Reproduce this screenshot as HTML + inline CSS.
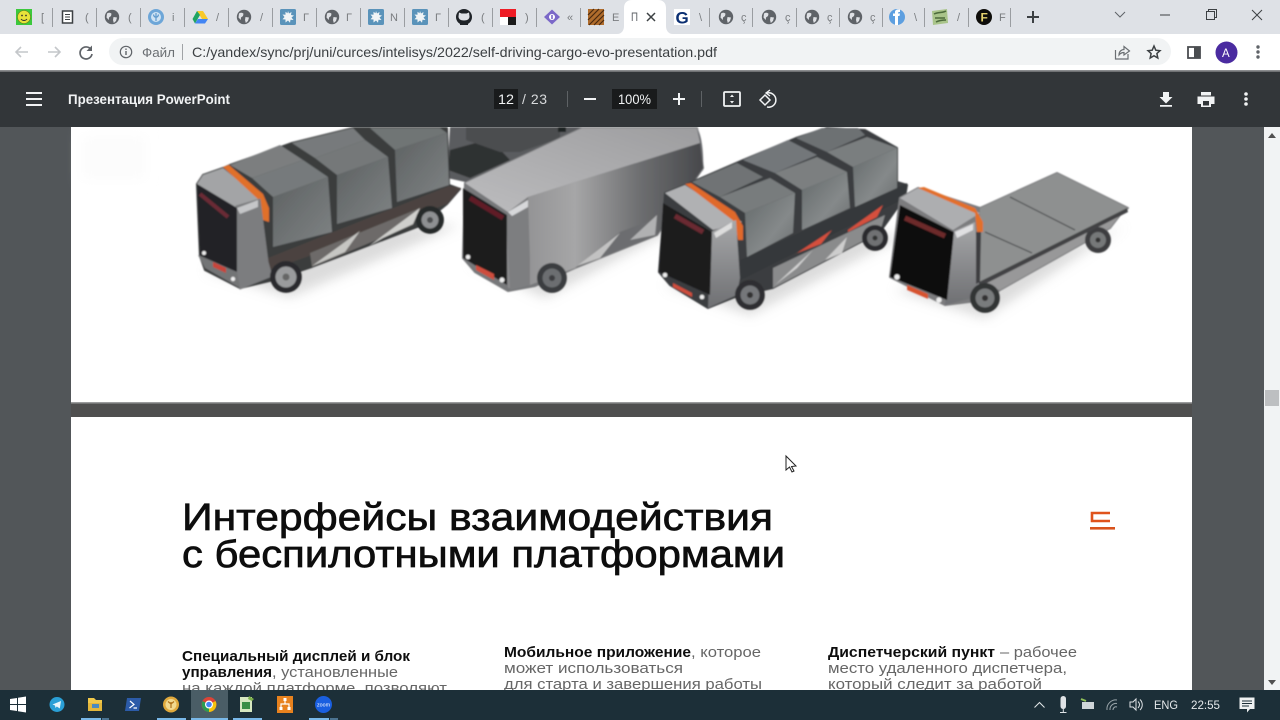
<!DOCTYPE html>
<html lang="ru"><head><meta charset="utf-8"><title>Презентация PowerPoint</title>
<style>
html,body{margin:0;padding:0;width:1280px;height:720px;overflow:hidden;background:#525659}
svg{display:block;position:absolute;left:0;top:0}
text{font-family:"Liberation Sans",sans-serif}
</style></head><body>
<svg width="1280" height="720" viewBox="0 0 1280 720" xmlns="http://www.w3.org/2000/svg">
<defs>
<filter id="b05" x="-5%" y="-5%" width="110%" height="110%"><feGaussianBlur stdDeviation="0.7"/></filter>
<filter id="b6" x="-30%" y="-100%" width="160%" height="300%"><feGaussianBlur stdDeviation="6"/></filter>
<filter id="bi" x="-10%" y="-10%" width="120%" height="120%"><feGaussianBlur stdDeviation="0.35"/></filter>
<linearGradient id="box" x1="0" y1="0" x2="1" y2="1"><stop offset="0" stop-color="#5d6162"/><stop offset="1" stop-color="#7f8384"/></linearGradient>
<linearGradient id="box2" x1="0" y1="0" x2="1" y2="1"><stop offset="0" stop-color="#63696a"/><stop offset=".6" stop-color="#85898a"/><stop offset="1" stop-color="#6a6e6f"/></linearGradient>
<linearGradient id="van" x1="0" y1="0" x2="1" y2="0"><stop offset="0" stop-color="#8b8b8d"/><stop offset=".35" stop-color="#a6a6a7"/><stop offset=".68" stop-color="#6d6e70"/><stop offset="1" stop-color="#47484b"/></linearGradient>
<linearGradient id="vanroof" x1="0" y1="1" x2="1" y2="0"><stop offset="0" stop-color="#bcbcbe"/><stop offset="1" stop-color="#9d9d9f"/></linearGradient>
<linearGradient id="cab" x1="0" y1="0" x2="0" y2="1"><stop offset="0" stop-color="#a7a8aa"/><stop offset="1" stop-color="#6e6f72"/></linearGradient>
<symbol id="globe" viewBox="0 0 16 16"><circle cx="8" cy="8" r="7.2" fill="#5f6368"/><path d="M3 4.500c2-1 3-1 4.500.2l-.5 2.300L5 8.500 4.800 11 2.500 8.500zM9.500 8l3.500.5-1 3.500-2.200 2-.8-3z" fill="#dfe1e5"/></symbol>
<symbol id="splat" viewBox="0 0 16 16"><rect width="16" height="16" rx="1.500" fill="#5a93ba"/><path d="M8 2l1 2.500 2.500-1.500-.5 3 3 .5-2.500 2 2 2.500-3-.3-.5 3-2-2.200-2.500 2 0-3-3-.3 2-2.200-2-2.500 3 .2 0-3 2 1.500z" fill="#f0f4f6"/></symbol>
</defs>

<!-- page background -->
<rect x="0" y="0" width="1280" height="720" fill="#525659"/>
<rect x="71" y="403" width="1121" height="14" fill="#4f4f4f"/>
<rect x="71" y="127" width="1121" height="276" fill="#ffffff"/>
<rect x="71" y="402" width="1121" height="1.500" fill="#9b9c9d"/>
<rect x="71" y="417" width="1121" height="280" fill="#ffffff"/>
<rect x="81" y="135" width="65" height="45" fill="#fcfcfc" filter="url(#b6)"/>

<!-- trucks -->
<g filter="url(#b05)">
<g fill="#b8b8b8" opacity=".5" filter="url(#b6)">
<path d="M205 270L290 297 460 225 400 225z"/><path d="M470 262L545 298 700 215 650 225z"/><path d="M665 285L750 315 905 235 860 235z"/><path d="M895 290L985 318 1125 225 1090 240z"/>
</g>
<!-- background flatbed behind van -->
<path d="M450 127H590L510 163 470 183 447 178z" fill="#5a5c5e"/>
<path d="M450 150L490 139 510 160 470 178 448 170z" fill="#2e3032"/>
<path d="M466 127H560V138L520 152H500L466 140z" fill="#4c4e50"/>
<rect x="558" y="127" width="8" height="5" fill="#1f2022"/>

<!-- TRUCK 1 -->
<path d="M197 184L203 175 223 168 230 165 292 143 353 128 447 128 449 185 460 189 447 204 420 226 312 267 270 281 240 288 205 270 200 256z" fill="#3b3c3e" stroke="#3b3c3e" stroke-width="2" stroke-linejoin="round"/>
<path d="M268 258L449 186 461 188 447 204 312 255 270 270z" fill="#4b4340"/>
<path d="M310 253L420 208 413 225 393 233 312 267z" fill="#6d6b69"/>
<path d="M312 266L360 231 345 252z" fill="#c6c6c3"/>
<path d="M369 246L420 208 413 224 383 238z" fill="#cfcfcc"/>
<circle cx="430" cy="220" r="14" fill="#27292b"/><circle cx="430" cy="220" r="8.500" fill="#8e9092"/><circle cx="430" cy="220" r="3" fill="#4d4f51"/>
<path d="M230 165L280 145 303 160 252 178z" fill="#7b7e7f"/>
<path d="M292 143L353 128 365 140 315 158z" fill="#777a7b"/>
<path d="M370 128H440L447 133 395 150z" fill="#707475"/>
<path d="M395 150L447 133 449 185 397 202z" fill="url(#box)"/>
<path d="M337 175L388 157 392 208 337 224z" fill="url(#box)"/>
<path d="M315 158L365 140 388 157 337 175z" fill="#757879"/>
<path d="M273 197L328 177 332 232 273 247z" fill="url(#box)"/>
<path d="M252 178L303 160 328 177 273 197z" fill="#767a7b"/>
<path d="M197 184L203 175 223 168 262 200 237 208z" fill="#a3a4a6"/>
<path d="M223 167L229 165 263 194 269 208 269 222 263 220 260 201z" fill="#e0702a"/>
<path d="M236 206L260 199 268 262 272 276 240 289 236 275z" fill="#7c7d7f" stroke="#7c7d7f" stroke-linejoin="round"/>
<path d="M237 208L258 200 258 207 240 214z" fill="#c5c6c8"/>
<path d="M197 184L237 208 237 272 200 255z" fill="#232426"/>
<path d="M200 194L228 217" stroke="#6b2a35" stroke-width="4"/>
<path d="M198 255L237 272 240 288 205 268z" fill="#737476"/>
<path d="M213 262L226 268 226 273 213 267z" fill="#c8453a"/>
<circle cx="204" cy="253" r="2" fill="#eee"/><circle cx="233" cy="279" r="2.200" fill="#eee"/>
<circle cx="286" cy="277" r="16" fill="#2a2c2e"/><circle cx="286" cy="277" r="10.500" fill="#9a9b9d"/><circle cx="286" cy="277" r="3.500" fill="#666"/>

<!-- TRUCK 2 -->
<path d="M465 183L582 128 697 128 703 168 657 235 575 268 535 286 508 291 475 272 463 258z" fill="#77787a" stroke="#77787a" stroke-width="2" stroke-linejoin="round"/>
<path d="M465 183L582 128H697L700 143 528 197 508 212z" fill="url(#vanroof)"/>
<path d="M697 128C702 135 704 155 703 172L700 143z" fill="#6b6c6f"/>
<path d="M528 197L700 143 703 168 657 235 575 268 530 285 508 288 506 215z" fill="url(#van)"/>
<path d="M575 268L620 232 657 218 657 235z" fill="#6c6d6f"/>
<path d="M577 266L620 233 600 258z" fill="#c2c2c2"/>
<path d="M630 240L657 215 655 235z" fill="#b0b1b2"/>
<path d="M506 215L528 197 530 260 530 285 510 290z" fill="#7d7e80"/>
<path d="M508 212L528 200 528 207 512 216z" fill="#d7d8da"/>
<path d="M463 188L507 215 507 285 463 258z" fill="#1d1c1e"/>
<path d="M470 198L503 218" stroke="#601f28" stroke-width="5"/>
<path d="M476 265L494 274 494 280 476 270z" fill="#cf4d3c"/>
<circle cx="468" cy="257" r="2.300" fill="#eee"/><circle cx="502" cy="280" r="2.500" fill="#eee"/>
<circle cx="552" cy="278" r="15" fill="#3a3c3f"/><circle cx="552" cy="278" r="9.500" fill="#6c6e71"/><circle cx="552" cy="278" r="3" fill="#3c3d40"/>

<!-- TRUCK 3 -->
<path d="M665 193L685 185 692 182 743 160 796 138 827 128 865 130 897 148 897 182 907 185 905 197 880 232 773 288 738 296 708 308 670 285 659 272z" fill="#3a3c3f" stroke="#3a3c3f" stroke-width="2" stroke-linejoin="round"/>
<path d="M773 268L885 215 880 232 773 288z" fill="#8a8b8c"/>
<path d="M775 285L813 250 797 268z" fill="#d3d3d3"/>
<path d="M825 260L847 237 842 253z" fill="#cdcdcd"/>
<path d="M740 260L907 183 906 198 735 283z" fill="#35373a"/>
<path d="M797 253L832 230 821 244 792 255z" fill="#d5503d"/>
<path d="M848 230L883 205 877 217 848 232z" fill="#d5503d"/>
<circle cx="875" cy="238" r="13" fill="#2a2c2e"/><circle cx="875" cy="238" r="8" fill="#6f7173"/><circle cx="875" cy="238" r="2.500" fill="#333"/>
<path d="M692 182L737 163 763 177 720 197z" fill="#6f7374"/>
<path d="M743 160L788 140 817 155 775 173z" fill="#73777a"/>
<path d="M796 138L822 128H858L865 135 827 152z" fill="#6d7173"/>
<path d="M853 167L897 148 897 188 855 207z" fill="url(#box2)"/>
<path d="M827 152L867 137 897 148 853 167z" fill="#7a7e7f"/>
<path d="M802 190L847 172 850 208 802 230z" fill="url(#box2)"/>
<path d="M775 173L817 157 847 172 802 190z" fill="#7b7f80"/>
<path d="M745 213L795 193 793 233 747 257z" fill="url(#box2)"/>
<path d="M720 197L770 178 795 193 745 213z" fill="#787c7d"/>
<path d="M665 193L685 185 742 222 713 230z" fill="#b0b1b3"/>
<path d="M685 184L691 183 735 212 743 226 743 240 738 240 735 222z" fill="#e0692a"/>
<path d="M711 232L736 220 740 278 737 295 708 308z" fill="url(#cab)"/>
<path d="M714 233L732 222 732 228 716 238z" fill="#ddd"/>
<path d="M663 203L712 232 710 295 659 272z" fill="#1c1b1d"/>
<path d="M675 216L703 232" stroke="#6a2a30" stroke-width="5"/>
<path d="M673 283L692 293 692 297 673 287z" fill="#cf4d3c"/>
<circle cx="665" cy="275" r="2.300" fill="#eee"/><circle cx="702" cy="297" r="2.300" fill="#eee"/>
<circle cx="750" cy="295" r="15" fill="#2d2f31"/><circle cx="750" cy="295" r="9.500" fill="#75777a"/><circle cx="750" cy="295" r="3" fill="#333"/>

<!-- TRUCK 4 -->
<path d="M900 198L918 188 980 208 1057 173 1128 208 1120 215 1110 228 1000 290 985 300 945 305 890 277z" fill="#7b7c7e" stroke="#7b7c7e" stroke-width="2" stroke-linejoin="round"/>
<path d="M980 285L1120 215 1110 228 1000 290z" fill="#989899"/>
<circle cx="1098" cy="240" r="13" fill="#3c3e40"/><circle cx="1098" cy="240" r="8" fill="#767879"/><circle cx="1098" cy="240" r="2.500" fill="#333"/>
<path d="M980 208L1057 173 1128 208 1127 212 977 286z" fill="#8e9090"/>
<path d="M977 283L1127 208 1128 212 979 287z" fill="#424345"/>
<path d="M1010 197L1075 230M985 232L1032 253" stroke="#414345" stroke-width="1"/>
<path d="M900 198L918 188 980 213 953 230z" fill="#adaeb0"/>
<path d="M918 188L924 187 975 208 983 222 983 232 977 232 975 213z" fill="#e26f2a"/>
<path d="M952 232L975 222 979 283 980 296 945 305z" fill="url(#cab)"/>
<path d="M955 232L973 224 973 230 957 238z" fill="#e0e0e2"/>
<path d="M976 232L981 232 980 282 976 284z" fill="#3c3d40"/>
<path d="M900 205L954 232 947 300 890 277z" fill="#0f0e10"/>
<path d="M905 218L945 236" stroke="#6d2a2c" stroke-width="5"/>
<path d="M907 285L928 294 928 299 907 290z" fill="#d7532f"/>
<circle cx="897" cy="277" r="2.700" fill="#eee"/><circle cx="939" cy="300" r="2.700" fill="#eee"/>
<circle cx="985" cy="298" r="15" fill="#323436"/><circle cx="985" cy="298" r="9.500" fill="#797b7d"/><circle cx="985" cy="298" r="3" fill="#333"/>
</g>

<!-- Slide text -->
<g filter="url(#bi)">
<text x="182" y="530" font-size="38" fill="#111" stroke="#111" stroke-width=".7" textLength="591" lengthAdjust="spacingAndGlyphs">Интерфейсы взаимодействия</text>
<text x="182" y="567" font-size="38" fill="#111" stroke="#111" stroke-width=".7" textLength="603" lengthAdjust="spacingAndGlyphs">с беспилотными платформами</text>
<path d="M1110 513H1092V521H1110" fill="none" stroke="#e0521d" stroke-width="2.600"/>
<rect x="1090" y="527" width="25" height="2.600" fill="#d9531e"/>
<text x="182" y="661" font-size="15" font-weight="bold" fill="#111" textLength="228" lengthAdjust="spacingAndGlyphs">Специальный дисплей и блок</text>
<text x="182" y="677" font-size="15" font-weight="bold" fill="#111" textLength="90" lengthAdjust="spacingAndGlyphs">управления</text>
<text x="272" y="677" font-size="15" fill="#666" textLength="126" lengthAdjust="spacingAndGlyphs">, установленные</text>
<text x="182" y="693" font-size="15" fill="#666" textLength="265" lengthAdjust="spacingAndGlyphs">на каждой платформе, позволяют</text>
<text x="504" y="657" font-size="15" font-weight="bold" fill="#111" textLength="187" lengthAdjust="spacingAndGlyphs">Мобильное приложение</text>
<text x="691" y="657" font-size="15" fill="#666" textLength="70" lengthAdjust="spacingAndGlyphs">, которое</text>
<text x="504" y="673" font-size="15" fill="#666" textLength="179" lengthAdjust="spacingAndGlyphs">может использоваться</text>
<text x="504" y="689" font-size="15" fill="#666" textLength="258" lengthAdjust="spacingAndGlyphs">для старта и завершения работы</text>
<text x="828" y="657" font-size="15" font-weight="bold" fill="#111" textLength="167" lengthAdjust="spacingAndGlyphs">Диспетчерский пункт</text>
<text x="1000" y="657" font-size="15" fill="#666" textLength="77" lengthAdjust="spacingAndGlyphs">– рабочее</text>
<text x="828" y="673" font-size="15" fill="#666" textLength="239" lengthAdjust="spacingAndGlyphs">место удаленного диспетчера,</text>
<text x="828" y="689" font-size="15" fill="#666" textLength="214" lengthAdjust="spacingAndGlyphs">который следит за работой</text>
</g>

<!-- Scrollbar -->
<rect x="1264" y="127" width="16" height="563" fill="#f1f3f4"/>
<rect x="1265" y="390" width="14" height="16" fill="#bdbfc1"/>
<path d="M1268 138L1272 133 1276 138z" fill="#505050"/>
<path d="M1268 680L1272 685 1276 680z" fill="#505050"/>

<!-- Cursor -->
<path d="M786 456V470L789.500 467 792 472 794 471 791.500 466.500 796 466z" fill="#fff" stroke="#222" stroke-width="1"/>

<!-- PDF toolbar -->
<rect x="0" y="71" width="1280" height="56" fill="#323639"/>
<rect x="0" y="71" width="1280" height="1" fill="#55585b"/>
<path d="M26 93H42M26 99H42M26 105H42" stroke="#f1f3f4" stroke-width="2"/>
<text x="68" y="104" font-size="13.500" font-weight="bold" fill="#f1f3f4" textLength="162" lengthAdjust="spacingAndGlyphs">Презентация PowerPoint</text>
<rect x="494" y="89" width="24" height="20" fill="#191b1c"/>
<text x="498" y="104" font-size="14" fill="#f1f3f4" textLength="16" lengthAdjust="spacingAndGlyphs">12</text>
<text x="522" y="104" font-size="14" fill="#d8dadc" textLength="25" lengthAdjust="spacing">/ 23</text>
<rect x="567" y="91" width="1" height="16" fill="#5e6265"/>
<rect x="584" y="98" width="12" height="2" fill="#f1f3f4"/>
<rect x="612" y="89" width="45" height="20" fill="#191b1c"/>
<text x="618" y="104" font-size="13.500" fill="#f1f3f4" textLength="33" lengthAdjust="spacingAndGlyphs">100%</text>
<path d="M673 99H685M679 93V105" stroke="#f1f3f4" stroke-width="2"/>
<rect x="701" y="91" width="1" height="16" fill="#5e6265"/>
<rect x="724" y="92" width="16" height="14" rx="1" fill="none" stroke="#f1f3f4" stroke-width="1.800"/>
<path d="M732 94.500L730 97H734zM732 103.500L730 101H734z" fill="#f1f3f4"/>
<path d="M760 100L765 95 770 100 765 105z" fill="none" stroke="#f1f3f4" stroke-width="1.500"/>
<path d="M767 93A7.200 7.200 0 1 1 767 107" fill="none" stroke="#f1f3f4" stroke-width="1.500"/>
<path d="M770 90L766 93 770 96" fill="none" stroke="#f1f3f4" stroke-width="1.400"/>
<path d="M1163 92H1169V97H1172.500L1166 103.500 1159.500 97H1163zM1160 105H1172V106.800H1160z" fill="#f1f3f4"/>
<path d="M1201 92H1211V95.500H1201zM1197.500 96.500H1214.500V104H1211V107H1201V104H1197.500z" fill="#f1f3f4"/>
<rect x="1203" y="101" width="6" height="4.500" fill="#323639"/>
<circle cx="1246" cy="94" r="1.800" fill="#f1f3f4"/><circle cx="1246" cy="99" r="1.800" fill="#f1f3f4"/><circle cx="1246" cy="104" r="1.800" fill="#f1f3f4"/>

<!-- Tab strip -->
<rect x="0" y="0" width="1280" height="34" fill="#dee1e6"/>
<g fill="#9a9da1">
<rect x="52" y="8" width="1" height="19"/><rect x="96" y="8" width="1" height="19"/><rect x="140" y="8" width="1" height="19"/><rect x="184" y="8" width="1" height="19"/><rect x="228" y="8" width="1" height="19"/><rect x="272" y="8" width="1" height="19"/><rect x="316" y="8" width="1" height="19"/><rect x="360" y="8" width="1" height="19"/><rect x="404" y="8" width="1" height="19"/><rect x="448" y="8" width="1" height="19"/><rect x="492" y="8" width="1" height="19"/><rect x="536" y="8" width="1" height="19"/><rect x="580" y="8" width="1" height="19"/><rect x="709" y="8" width="1" height="19"/><rect x="752" y="8" width="1" height="19"/><rect x="796" y="8" width="1" height="19"/><rect x="839" y="8" width="1" height="19"/><rect x="882" y="8" width="1" height="19"/><rect x="924" y="8" width="1" height="19"/><rect x="968" y="8" width="1" height="19"/><rect x="1010" y="8" width="1" height="19"/>
</g>
<path d="M617 34C622 34 624 30 624 26V8C624 3 627 0 632 0H658C663 0 666 3 666 8V26C666 30 668 34 673 34z" fill="#fff"/>
<!-- tab icons -->
<rect x="16" y="9" width="16" height="16" fill="#3cc83c"/><circle cx="24" cy="17" r="6.500" fill="#e8e23a" stroke="#6a7a1a" stroke-width=".6"/><circle cx="22" cy="15.500" r=".9" fill="#333"/><circle cx="26" cy="15.500" r=".9" fill="#333"/><path d="M21 19C22.500 21 25.500 21 27 19" fill="none" stroke="#333" stroke-width=".9"/>
<rect x="62.500" y="11" width="10" height="12" fill="#fff" stroke="#3c4043" stroke-width="1.500"/><path d="M65 14.500H70M65 17H70M65 19.500H70" stroke="#3c4043" stroke-width="1"/>
<use href="#globe" x="104" y="9" width="16" height="16"/>
<circle cx="156" cy="17" r="8" fill="#6da6d8"/><circle cx="156" cy="17" r="5" fill="#cfe3f3"/><path d="M156 13V21M153.500 14.500C154 18 158 18 158.500 14.500" stroke="#5c98cc" stroke-width="1.200" fill="none"/>
<path d="M197 11H203L208 19H202z" fill="#f8c92a"/><path d="M197 11L192.500 19 195 23.500 200 15z" fill="#1fa463"/><path d="M195 23.500H205L208 19H198z" fill="#4285f4"/>
<use href="#globe" x="236" y="9" width="16" height="16"/>
<use href="#splat" x="280" y="9" width="16" height="16"/>
<use href="#globe" x="324" y="9" width="16" height="16"/>
<use href="#splat" x="368" y="9" width="16" height="16"/>
<use href="#splat" x="412" y="9" width="16" height="16"/>
<circle cx="464" cy="17" r="8" fill="#1f2328"/><path d="M459 12.500L461.500 13.500H466.500L469 12.500 469.500 16.500C469.500 19 467.500 20.500 464 20.500S458.500 19 458.500 16.500z" fill="#dee1e6"/>
<path d="M460 25V21.500H468V25" fill="#1f2328"/>
<rect x="500" y="9" width="16" height="8" fill="#ee1c25"/><rect x="500" y="17" width="8" height="8" fill="#fff"/><rect x="508" y="17" width="8" height="8" fill="#1a1a1a"/>
<path d="M552 9.500L560 17 552 24.500 544 17z" fill="#7b68c8"/><circle cx="552" cy="17" r="3" fill="#fff"/><rect x="551.200" y="15" width="1.600" height="4" fill="#7b68c8"/>
<rect x="588" y="9" width="16" height="16" fill="#b06c2c"/><path d="M588 15L594 9M588 20L599 9M589 25L604 10M594 25L604 15M599 25L604 20" stroke="#4a2a10" stroke-width="1.200"/>
<rect x="674" y="9" width="16" height="16" fill="#fff"/>
<text x="675.500" y="23.500" font-size="17" font-weight="bold" fill="#0b2f72">G</text>
<use href="#globe" x="718" y="9" width="16" height="16"/>
<use href="#globe" x="761" y="9" width="16" height="16"/>
<use href="#globe" x="804" y="9" width="16" height="16"/>
<use href="#globe" x="847" y="9" width="16" height="16"/>
<circle cx="897" cy="17" r="8" fill="#5d9fe0"/><path d="M895 25V16H893V13.500H895V12C895 10 897 9 900 9.500V12C898.500 12 898 12 898 13.500H900L899.500 16H898V25z" fill="#fff"/>
<path d="M932 11L947 9 948 23 933 25z" fill="#a9c48a"/><path d="M934 14C938 12 943 13 946 11M935 18H945M936 22C940 20 944 20 946 20" stroke="#4c6a3b" stroke-width="1.500" fill="none"/>
<circle cx="984" cy="17" r="8" fill="#0e0d0a"/><text x="980.500" y="21.500" font-size="12" font-weight="bold" fill="#e5d26e" font-family="Liberation Serif">F</text>
<!-- tab labels -->
<g font-size="11" fill="#7a7d80">
<text x="41" y="21">[</text><text x="85" y="21">(</text><text x="128" y="21">(</text><text x="172" y="21">i</text><text x="216" y="21">/</text><text x="260" y="21">/</text><text x="303" y="21">Г</text><text x="346" y="21">Г</text><text x="390" y="21">N</text><text x="435" y="21">Г</text><text x="481" y="21">(</text><text x="525" y="21">)</text><text x="567" y="21">«</text><text x="612" y="21">Е</text><text x="699" y="21">\</text><text x="741" y="21">ç</text><text x="785" y="21">ç</text><text x="827" y="21">ç</text><text x="870" y="21">ç</text><text x="914" y="21">\</text><text x="957" y="21">/</text><text x="999" y="21">F</text>
</g>
<text x="631" y="21" font-size="12" fill="#5f6368" textLength="7" lengthAdjust="spacingAndGlyphs">П</text>
<path d="M647 13L655 21M655 13L647 21" stroke="#3c4043" stroke-width="1.500"/>
<path d="M1027 17H1039M1033 11V23" stroke="#3c4043" stroke-width="2"/>
<path d="M1115 12L1120 17 1125 12" fill="none" stroke="#5f6368" stroke-width="1"/>
<rect x="1160" y="14.500" width="10" height="1" fill="#3c4043"/>
<rect x="1206.500" y="11.500" width="8" height="8" fill="none" stroke="#3c4043" stroke-width="1"/>
<path d="M1208.500 11.500V9.500H1216.500V17.500H1214.500" fill="none" stroke="#3c4043" stroke-width="1"/>
<path d="M1252 10L1262 20M1262 10L1252 20" stroke="#3c4043" stroke-width="1"/>

<!-- Address bar -->
<rect x="0" y="34" width="1280" height="37" fill="#fff"/>
<rect x="0" y="70" width="1280" height="1.500" fill="#8a8c8e"/>
<rect x="109" y="38" width="1062" height="27" rx="13.500" fill="#f1f3f4"/>
<path d="M28 52H16M21 47L16 52 21 57" fill="none" stroke="#c4c7ca" stroke-width="1.600"/>
<path d="M48 52H60M55 47L60 52 55 57" fill="none" stroke="#c4c7ca" stroke-width="1.600"/>
<path d="M91 49.500A6 6 0 1 0 92 54" fill="none" stroke="#5f6368" stroke-width="1.700"/>
<path d="M92 45.500V51H86.500z" fill="#5f6368"/>
<circle cx="126" cy="52" r="5.700" fill="none" stroke="#5f6368" stroke-width="1.200"/>
<rect x="125.300" y="51" width="1.400" height="4" fill="#5f6368"/><rect x="125.300" y="48.500" width="1.400" height="1.400" fill="#5f6368"/>
<text x="142" y="57" font-size="13" fill="#6b6f73" textLength="33" lengthAdjust="spacingAndGlyphs">Файл</text>
<rect x="182" y="44" width="1" height="16" fill="#a0a3a6"/>
<text x="192" y="57" font-size="14" fill="#3c4043" textLength="525" lengthAdjust="spacingAndGlyphs">C:/yandex/sync/prj/uni/curces/intelisys/2022/self-driving-cargo-evo-presentation.pdf</text>
<path d="M1115.500 50V59H1128V54" fill="none" stroke="#6b6f73" stroke-width="1.200"/>
<path d="M1119 55C1119 51 1122 49.500 1124 49.500V46.500L1129.500 51 1124 55V52.500C1122 52.500 1120.500 53 1119 55z" fill="none" stroke="#6b6f73" stroke-width="1.200"/>
<path d="M1154 46L1155.800 50.200 1160 50.700 1156.900 53.500 1157.800 58 1154 55.700 1150.200 58 1151.100 53.500 1148 50.700 1152.200 50.200z" fill="none" stroke="#3c4043" stroke-width="1.500"/>
<rect x="1188" y="47" width="12" height="11" fill="none" stroke="#4a4d50" stroke-width="1.800"/><rect x="1194" y="47" width="6" height="11" fill="#4a4d50"/>
<circle cx="1226.500" cy="52.500" r="11" fill="#4a2ba0"/>
<text x="1222" y="57" font-size="11.500" fill="#fff">A</text>
<circle cx="1258" cy="47" r="1.700" fill="#5f6368"/><circle cx="1258" cy="52" r="1.700" fill="#5f6368"/><circle cx="1258" cy="57" r="1.700" fill="#5f6368"/>

<!-- Taskbar -->
<rect x="0" y="690" width="1280" height="30" fill="#1c2f38"/>
<rect x="191" y="690" width="37" height="30" fill="#4a5d66"/>
<path d="M10 699L17 698V704H10zM18 697.800L26 696.500V704H18zM10 705H17V711L10 710zM18 705H26V712.500L18 711.300z" fill="#fff"/>
<circle cx="57" cy="704.500" r="7.500" fill="#2a9fd6"/><path d="M52.500 704.500L61 701 59.800 708.500 56.800 706.500 55.500 708 55 705.500z" fill="#e8f5fb"/>
<path d="M88 698H94L96 700H102V711H88z" fill="#f0c84a"/><rect x="88" y="703" width="14" height="8" fill="#e3b73c"/><rect x="92" y="704" width="7" height="4" fill="#4a8ac0"/>
<path d="M127 698H141L139 711H125z" fill="#2c5ba8"/><path d="M130 701L134 704.500 129.500 708M133.500 708H137" fill="none" stroke="#fff" stroke-width="1.200"/>
<circle cx="171" cy="704.500" r="8" fill="#e0a93c"/><circle cx="171" cy="704.500" r="5.500" fill="#f2d98f"/><path d="M171 708V702M168 701.500L171 704 174 701.500" stroke="#b0721a" stroke-width="1.200" fill="none"/>
<circle cx="209" cy="704.500" r="7.500" fill="#db4437"/><path d="M209 704.500L215.500 701A7.500 7.500 0 0 1 209 712z" fill="#f4c20d"/><path d="M209 704.500V712A7.500 7.500 0 0 1 202.500 701z" fill="#2d9b52"/><circle cx="209" cy="704.500" r="3.400" fill="#4285f4" stroke="#fff" stroke-width="1.200"/>
<rect x="240" y="697" width="12" height="15" fill="#d7e7c0"/><rect x="242" y="702" width="8" height="7" fill="#3b8e46"/><path d="M249 696L254 699 252 701 248 699z" fill="#7cb04b"/>
<rect x="277" y="696" width="16" height="17" fill="#e8821e"/><path d="M285 699V704M281 708V704H289V708" stroke="#fff" stroke-width="1.200" fill="none"/><rect x="283.500" y="698" width="3" height="3" fill="#fff"/><rect x="279.500" y="707" width="3" height="3" fill="#fff"/><rect x="287.500" y="707" width="3" height="3" fill="#fff"/>
<circle cx="323.500" cy="704.500" r="8.500" fill="#1a5fe0"/><text x="317" y="706.500" font-size="5.500" fill="#fff" textLength="13" lengthAdjust="spacingAndGlyphs">zoom</text>
<g fill="#79b8e8">
<rect x="81" y="718" width="20" height="2"/><rect x="102" y="718" width="7" height="2" opacity=".5"/><rect x="157" y="718" width="29" height="2"/><rect x="191" y="718" width="37" height="2"/><rect x="233" y="718" width="29" height="2"/><rect x="309" y="718" width="20" height="2"/><rect x="330" y="718" width="8" height="2" opacity=".5"/>
</g>
<path d="M1034.500 707.500L1039.500 702.500 1044.500 707.500" fill="none" stroke="#e4e8ea" stroke-width="1"/>
<rect x="1060.500" y="696" width="5.500" height="13" rx="2.700" fill="#dfe3e6"/><path d="M1063.300 709V712M1060 712.500H1066.500" stroke="#dfe3e6" stroke-width="1"/>
<rect x="1082" y="702" width="12" height="7" fill="#cfd5d8"/><path d="M1081 699L1086 701" stroke="#8fc05a" stroke-width="2"/>
<path d="M1107 710A9 9 0 0 1 1117 700M1110 710A6 6 0 0 1 1117 703.500M1113 710A3 3 0 0 1 1117 707" fill="none" stroke="#9ba6ab" stroke-width="1"/>
<path d="M1130 702H1133L1136 699V710L1133 707H1130z" fill="none" stroke="#dfe3e6" stroke-width="1"/><path d="M1138 701.500C1140 703.500 1140 706 1138 708M1140 699.500C1143 702.500 1143 707 1140 710" fill="none" stroke="#dfe3e6" stroke-width="1"/>
<text x="1154" y="709" font-size="12" fill="#e4e8ea" textLength="24" lengthAdjust="spacingAndGlyphs">ENG</text>
<text x="1191" y="709" font-size="12" fill="#e4e8ea" textLength="29" lengthAdjust="spacingAndGlyphs">22:55</text>
<path d="M1239.500 697.500H1254.500V709H1250L1247 712.500V709H1239.500z" fill="#eef1f2"/><path d="M1242 701H1252M1242 703.500H1252M1242 706H1249" stroke="#1c2f38" stroke-width="1"/>
</svg>
</body></html>
